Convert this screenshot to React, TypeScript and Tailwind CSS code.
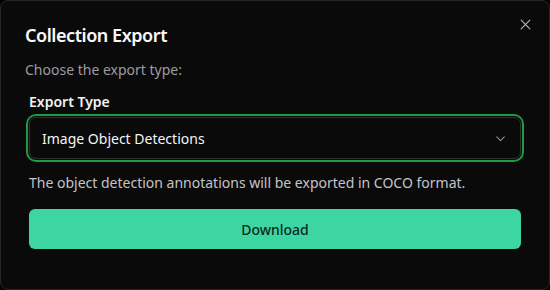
import React from 'react';

const App: React.FC = () => {
  return (
    <div className="w-[550px] h-[290px] bg-black" style={{ fontFamily: '"Noto Sans", "Open Sans", sans-serif' }}>
      <div className="relative w-full h-full rounded-lg border border-[#27272a] bg-[#0b0a0a] px-[24px] pt-[20px]">
        <button className="absolute right-[17px] top-[17px] text-[#b4b4b8]">
          <svg className="w-[13px] h-[13px]" fill="none" stroke="currentColor" viewBox="0 0 24 24">
            <path strokeLinecap="round" strokeLinejoin="round" strokeWidth={2.2} d="M4 4l16 16M20 4L4 20" />
          </svg>
        </button>

        <h2 className="text-[18px] font-semibold leading-[28px] tracking-tight text-[#fafafa]">Collection Export</h2>
        <p className="mt-[11px] text-[14px] leading-[20px] text-[#9c9ca1]">Choose the export type:</p>

        <div className="mt-[12px] px-[4px]">
          <label className="block text-[14px] font-semibold leading-[20px] text-[#f4f4f5]">Export Type</label>
          <div className="mt-[5px] flex h-[42px] items-center justify-between rounded-[7px] border border-[#2e2e31] bg-[#0b0a0a] pl-[12px] pr-[13px] ring-2 ring-[#1e9a46] ring-offset-1 ring-offset-[#0b0a0a]">
            <span className="text-[14px] text-[#f4f4f5]">Image Object Detections</span>
            <svg className="w-[13px] h-[13px] text-[#8f8f94]" fill="none" stroke="currentColor" viewBox="0 0 24 24">
              <path strokeLinecap="round" strokeLinejoin="round" strokeWidth={2} d="M5 9l7 7 7-7" />
            </svg>
          </div>

          <p className="mt-[14px] text-[14px] leading-[20px] text-[#c4c4c8]">
            The object detection annotations will be exported in COCO format.
          </p>

          <button className="mt-[16px] h-[40px] w-full rounded-[6px] bg-[#3dd6a3] text-[14px] font-medium text-[#0b2a1e]">
            Download
          </button>
        </div>
      </div>
    </div>
  );
};

export default App;
